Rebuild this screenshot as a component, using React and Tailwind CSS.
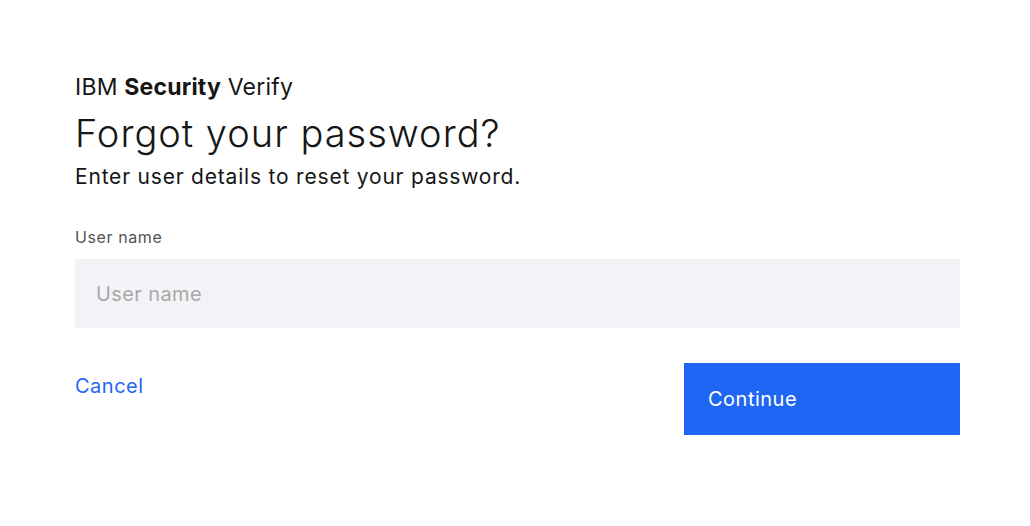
export default function App() {
  return (
    <div
      className="h-[526px] w-[1030px] bg-white text-[#161616]"
      style={{ fontFamily: 'Inter, "Noto Sans", sans-serif' }}
    >
      <div className="flex w-[885px] flex-col pl-[75px] pt-[71px] box-content">
        <div className="text-[23px] leading-[32px] tracking-[0.2px]">
          IBM <span className="font-bold">Security</span> Verify
        </div>
        <h1 className="mt-[6px] text-[38px] font-light leading-[48px] tracking-[1px]">
          Forgot your password?
        </h1>
        <p className="mt-[6px] text-[21px] leading-[28px] tracking-[0.8px]">
          Enter user details to reset your password.
        </p>
        <label className="mt-[36px] text-[16px] leading-[20px] tracking-[0.6px] text-[#525252]">
          User name
        </label>
        <input
          className="mt-[12px] h-[69px] w-full bg-[#f2f3f6] px-[21px] text-[20px] tracking-[0.4px] outline-none placeholder:text-[#a8a8a8]"
          placeholder="User name"
        />
        <div className="mt-[35px] flex items-start justify-between">
          <a className="mt-[9px] text-[20px] leading-[28px] tracking-[0.5px] text-[#1f66f5]">
            Cancel
          </a>
          <button className="flex h-[72px] w-[276px] items-center bg-[#1f66f5] px-[24px] text-[20px] tracking-[0.5px] text-white">
            Continue
          </button>
        </div>
      </div>
    </div>
  );
}
